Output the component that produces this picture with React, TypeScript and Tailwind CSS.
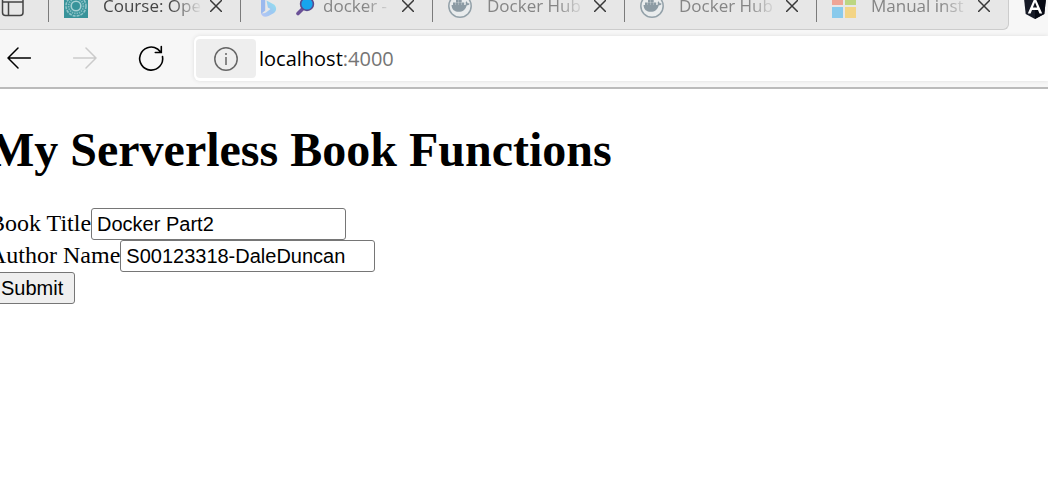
import { useState, type ReactNode } from "react";

function CourseIcon() {
  return (
    <svg className="h-6 w-6 shrink-0" viewBox="0 0 24 24" fill="none" aria-hidden="true">
      <rect width="24" height="24" fill="#38939a" />
      <circle cx="12" cy="12" r="10" stroke="#8fc4c8" strokeWidth="1.6" strokeDasharray="3 1" />
      <circle cx="12" cy="12" r="7.4" stroke="#84bdc2" strokeWidth="1.8" strokeDasharray="1.4 1" />
      <circle cx="12" cy="12" r="4.8" stroke="#a5d0d3" strokeWidth="1.6" />
    </svg>
  );
}

function BingIcon() {
  return (
    <svg className="h-6 w-6 shrink-0" viewBox="0 0 24 24" aria-hidden="true">
      <defs>
        <linearGradient id="bing" x1="0" y1="1" x2="1" y2="0">
          <stop offset="0" stopColor="#b8c5f5" />
          <stop offset="0.5" stopColor="#9cc8f2" />
          <stop offset="1" stopColor="#8fe6ee" />
        </linearGradient>
      </defs>
      <path d="M5 1l4.200 1.500v14L5 20z" fill="#9bb9ee" />
      <path d="M10.500 6.500l6.500 3.500c4 2 4 6.800 1 9L12.500 22C8.500 24 5 22 5 18.500c2 1.600 4 .5 5 0l4.500-3.500-2.600-1.400z" fill="url(#bing)" />
    </svg>
  );
}

function DockerIcon() {
  return (
    <svg className="h-6 w-6 shrink-0" viewBox="0 0 24 24" aria-hidden="true">
      <circle cx="12" cy="12" r="11.200" fill="#e9eced" stroke="#93a1a9" strokeWidth="1.500" />
      <path
        d="M3.500 11h13c1 0 1.500-.6 1.300-1.600-.2-1 .1-1.600.6-2.100.8.6 1.100 1.200 1.100 2 .8-.1 1.500 0 2.100.4-.5 1.100-1.400 1.500-2.800 1.500-1.300 4.600-4 6.600-8 6.600-4.200 0-7-2.200-7.300-6.800z"
        fill="#8c9ba4"
      />
      <path d="M5 8.500h2.700V11H5zM8 8.500h2.700V11H8zM11 8.500h2.700V11H11zM14 8.500h2.200V11H14zM8 5.700h2.700v2.500H8zM11 5.700h2.700v2.500H11zM11 3h2.700v2.400H11z" fill="#8c9ba4" />
    </svg>
  );
}

function WindowsIcon() {
  return (
    <svg className="h-6 w-6 shrink-0" viewBox="0 0 24 24" aria-hidden="true">
      <path d="M0 0h11v11H0z" fill="#efa596" />
      <path d="M13 0h11v11H13z" fill="#bcd681" />
      <path d="M0 13h11v11H0z" fill="#89caec" />
      <path d="M13 13h11v11H13z" fill="#f3d485" />
    </svg>
  );
}

function AngularIcon() {
  return (
    <svg className="h-6 w-6 shrink-0" viewBox="0 0 24 24" aria-hidden="true">
      <path d="M12 -1L23 3.500 21.300 19 12 24 2.700 19 1 3.500z" fill="#171b27" />
      <path d="M12 -1L23 3.500 21.300 19 12 24z" fill="#070a14" />
      <path fillRule="evenodd" d="M12 2L4.800 18.500h2.800L9 14.900h6l1.500 3.600h2.700zM12 7.300l2.100 5.200H9.900z" fill="#fff" />
    </svg>
  );
}

function MagnifierIcon() {
  return (
    <svg className="h-5 w-5 shrink-0" viewBox="0 0 20 20" aria-hidden="true">
      <path d="M3 17.500L8 12.500" stroke="#6b5197" strokeWidth="3.600" strokeLinecap="round" />
      <circle cx="12" cy="8" r="6.400" fill="#17a5ee" stroke="#594b8f" strokeWidth="1.600" />
    </svg>
  );
}

function Tab({ icon, mark, title, dark }: { icon: ReactNode; mark?: ReactNode; title: string; dark?: boolean }) {
  return (
    <div className="flex h-[46px] w-48 shrink-0 items-center pr-3 pl-4">
      {icon}
      <span className={`ml-[15px] flex min-w-0 flex-1 items-center text-[17px] whitespace-nowrap [mask-image:linear-gradient(to_right,black_70%,transparent_100%)] ${dark ? "text-[#454545]" : "text-[#858585]"}`}>
        {mark}
        {title}
      </span>
      <button type="button" aria-label={`Close ${title}`} className="ml-0.5 flex h-6 w-6 shrink-0 items-center justify-center">
        <svg className="h-3 w-3" viewBox="0 0 12 12" fill="none" stroke="#383838" strokeWidth="1.500">
          <path d="M0 0l12 12M12 0L0 12" />
        </svg>
      </button>
    </div>
  );
}

function Divider() {
  return <span className="-mr-px mb-[7px] h-10 w-px shrink-0 bg-[#7b7b7b]" />;
}

export default function App() {
  const [title, setTitle] = useState("Docker Part2");
  const [author, setAuthor] = useState("S00123318-DaleDuncan");
  const field = "h-8 w-[255px] rounded-[3px] border border-[#767676] bg-white px-[5px] font-['Liberation_Sans',Arial,sans-serif] text-xl";

  return (
    <div className="min-h-screen overflow-x-hidden bg-white text-black">
      <header className="border-b-2 border-[#bbbbbb] bg-[#f7f7f7] font-['Open_Sans','Noto_Sans',sans-serif]">
        <div className="flex h-[30px] items-end overflow-hidden">
          <div className="flex shrink-0 items-end rounded-br-md border-r border-b border-[#cccccc] bg-[#e7e7e7]">
            <button type="button" aria-label="Tab actions" className="flex h-[46px] w-12 shrink-0 items-center">
              <svg className="h-6 w-6" viewBox="0 0 24 24" fill="none" stroke="#444" strokeWidth="1.500">
                <rect x="2.500" y="1" width="20.500" height="20.500" rx="3" />
                <path d="M2.500 8H23M8.500 8V21.500" />
              </svg>
            </button>
            <Divider />
            <Tab icon={<CourseIcon />} title="Course: Ope" dark />
            <Divider />
            <Tab icon={<BingIcon />} mark={<span className="mr-2"><MagnifierIcon /></span>} title="docker -" />
            <Divider />
            <Tab icon={<DockerIcon />} title="Docker Hub" />
            <Divider />
            <Tab icon={<DockerIcon />} title="Docker Hub" />
            <Divider />
            <Tab icon={<WindowsIcon />} title="Manual inst" />
          </div>
          <div className="flex h-[47px] shrink-0 items-center pl-3.5">
            <AngularIcon />
          </div>
        </div>
        <div className="flex h-[57px] items-center">
          <nav className="flex w-[194px] shrink-0 items-center pb-0.5">
            <button type="button" aria-label="Back" className="ml-[7px] flex h-8 w-8 items-center">
              <svg className="h-6 w-6" viewBox="0 0 24 24" fill="none" stroke="#000" strokeWidth="1.500" strokeLinecap="round">
                <path d="M1 12H23.500M11 2L1 12 11 22" />
              </svg>
            </button>
            <button type="button" aria-label="Forward" className="ml-[34px] flex h-8 w-8 items-center">
              <svg className="h-6 w-6" viewBox="0 0 24 24" fill="none" stroke="#cbcbcb" strokeWidth="1.500" strokeLinecap="round">
                <path d="M.5 12H23M13 2L23 12 13 22" />
              </svg>
            </button>
            <button type="button" aria-label="Refresh" className="ml-[30px] flex h-8 w-8 items-center justify-center">
              <svg className="h-7 w-7" viewBox="0 0 28 28" fill="none" stroke="#000" strokeWidth="1.600" strokeLinecap="round">
                <path d="M25.500 12.500A11.500 11.500 0 1 1 20.500 5L24 8.300M24.300 2.500v6h-6" />
              </svg>
            </button>
          </nav>
          <div className="flex h-[45px] min-w-0 flex-1 items-center rounded-l-md bg-white pl-0.5 shadow-[0_0_4px_#dddddd]">
            <button type="button" aria-label="View site information" className="flex h-[39px] w-[60px] shrink-0 items-center justify-center rounded-sm bg-[#eeeeee]">
              <svg className="h-6 w-6" viewBox="0 0 24 24" fill="none" stroke="#666" strokeWidth="1.500">
                <circle cx="12" cy="12" r="11.200" />
                <path d="M12 10V18M12 6v2" />
              </svg>
            </button>
            <a href="http://localhost:4000" className="ml-[3px] text-xl text-black">
              localhost<span className="text-[#757575]">:4000</span>
            </a>
          </div>
        </div>
      </header>
      <main className="-ml-[11px] pt-[33px] font-['Liberation_Serif','Times_New_Roman',serif] text-2xl whitespace-nowrap">
        <h1 className="text-5xl leading-14 font-bold">My Serverless Book Functions</h1>
        <form className="mt-[30px]" onSubmit={(event) => event.preventDefault()}>
          <div className="flex h-8 items-center">
            <label htmlFor="book-title" className="pb-0.5">Book Title</label>
            <input id="book-title" className={field} value={title} onChange={(event) => setTitle(event.target.value)} />
          </div>
          <div className="flex h-8 items-center">
            <label htmlFor="author-name" className="pb-0.5">Author Name</label>
            <input id="author-name" className={field} value={author} onChange={(event) => setAuthor(event.target.value)} />
          </div>
          <button type="submit" className="flex h-8 items-center rounded-[3px] border border-[#767676] bg-[#efefef] px-[11px] font-['Liberation_Sans',Arial,sans-serif] text-xl">
            Submit
          </button>
        </form>
      </main>
    </div>
  );
}
